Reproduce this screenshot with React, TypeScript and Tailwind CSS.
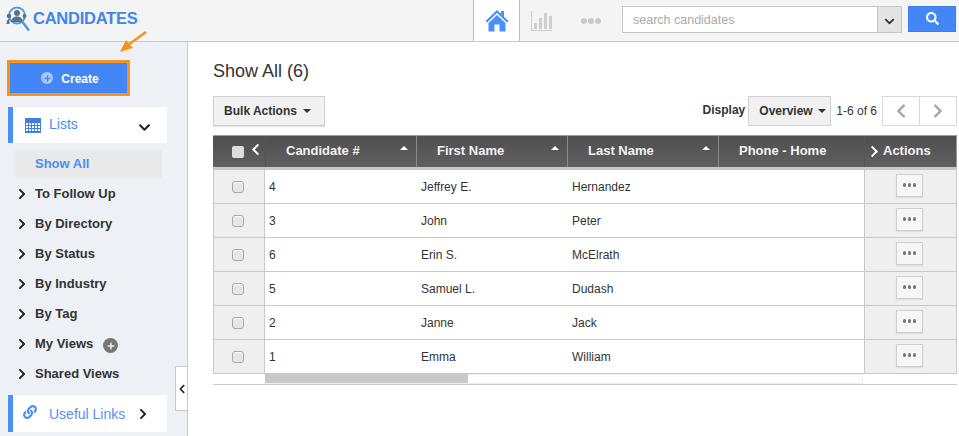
import React from "react";
import { FaChevronDown, FaChevronLeft, FaChevronRight, FaLink, FaSearch, FaPlus } from "react-icons/fa";

const F = "font-['Liberation_Sans',Arial,sans-serif]";

const rows = [
  ["4", "Jeffrey E.", "Hernandez"],
  ["3", "John", "Peter"],
  ["6", "Erin S.", "McElrath"],
  ["5", "Samuel L.", "Dudash"],
  ["2", "Janne", "Jack"],
  ["1", "Emma", "William"],
];

const nav = ["To Follow Up", "By Directory", "By Status", "By Industry", "By Tag", "My Views", "Shared Views"];

function Logo() {
  return (
    <svg width="28" height="28" viewBox="0 0 28 28" className="shrink-0">
      <circle cx="14" cy="10.500" r="8" fill="none" stroke="#4a9be8" strokeWidth="2" />
      <line x1="19.500" y1="17" x2="26" y2="25.500" stroke="#4a9be8" strokeWidth="2.500" />
      <circle cx="14" cy="8" r="3" fill="#5d7186" />
      <path d="M8.500 17c0-4 2.500-5.500 5.500-5.500s5.500 1.500 5.500 5.500z" fill="#5d7186" />
      <circle cx="6" cy="11" r="2.300" fill="#5d7186" />
      <path d="M3.500 19c0-3.500 1-5 3-5v5z" fill="#5d7186" />
      <circle cx="21.500" cy="11" r="2" fill="#5d7186" />
    </svg>
  );
}

function HomeIcon() {
  return (
    <svg width="24" height="23" viewBox="0 0 24 23">
      <path d="M12 1 L0.500 12 L2 13.500 L12 4 L22 13.500 L23.500 12 L19 7.700 V2 H16 V4.800 Z" fill="#4a90f5" />
      <path d="M12 6 L3.500 14 V22.500 H9.500 V15.500 H14.500 V22.500 H20.500 V14 Z" fill="#4a90f5" />
    </svg>
  );
}

function CalendarIcon() {
  return (
    <svg width="16" height="15" viewBox="0 0 16 15">
      <rect width="16" height="15" fill="#3f7fe0" />
      <g fill="#ffffff">
        {[5, 8, 11].map((y) =>
          [1, 4, 7, 10, 13].map((x) => <rect key={`${x}-${y}`} x={x} y={y} width="2" height="2" />)
        )}
      </g>
    </svg>
  );
}

function BarsIcon() {
  return (
    <svg width="22" height="20" viewBox="0 0 22 20">
      <path d="M0.500 0v19.500H21" fill="none" stroke="#cfcfcf" />
      <rect x="3" y="12" width="3" height="6" fill="#cfcfcf" />
      <rect x="8" y="7" width="3" height="11" fill="#cfcfcf" />
      <rect x="13" y="2" width="3" height="16" fill="#cfcfcf" />
      <rect x="18" y="5" width="3" height="13" fill="#cfcfcf" />
    </svg>
  );
}

function Arrow() {
  return (
    <svg width="28" height="24" viewBox="0 0 28 24" className="absolute left-[119px] top-[-11px]">
      <path d="M27 1 L9 14" stroke="#f6931d" strokeWidth="2.500" fill="none" />
      <path d="M1 21 L7 9 L14 17 Z" fill="#f6931d" />
    </svg>
  );
}

function Check({ header }: { header?: boolean }) {
  return (
    <span
      className={
        header
          ? "block w-3 h-3 rounded-[2px] bg-[#dedede]"
          : "block w-3 h-3 rounded-[3px] border border-[#a9a9a9] bg-[#e6e6e6] shadow-[inset_0_1px_1px_#fff]"
      }
    />
  );
}

function Caret() {
  return <span className="w-0 h-0 border-x-[4px] border-x-transparent border-t-[4px] border-t-[#333]" />;
}

function HeaderCell({ label, sort }: { label: string; sort?: boolean }) {
  return (
    <div className="w-[151px] h-full flex items-center pl-[20px] border-r border-[#8a8a8a] relative">
      <span className="text-[13px] font-bold text-[#f2f2f2] pb-[2px]">{label}</span>
      {sort && (
        <span className="absolute right-[8px] top-[10px] w-0 h-0 border-x-[4px] border-x-transparent border-b-[4px] border-b-white" />
      )}
    </div>
  );
}

export default function App() {
  return (
    <div className={`${F} w-[959px] h-[436px] overflow-hidden bg-white flex flex-col text-[#333]`}>
      <header className="h-[42px] shrink-0 bg-[#f4f4f4] border-b border-[#c9c9c9] flex">
        <div className="flex items-center pl-[3px] w-[473px] gap-[2px] pb-[4px]">
          <Logo />
          <span className="text-[16.500px] font-bold text-[#3f86ea] tracking-[-0.25px]">CANDIDATES</span>
        </div>
        <div className="w-[47px] bg-white border-x border-[#bdbdbd] flex items-center justify-center">
          <HomeIcon />
        </div>
        <div className="w-[102px] flex items-center">
          <span className="ml-[11px] flex"><BarsIcon /></span>
          <span className="ml-[28px] flex gap-[1px]">
            <i className="block w-[6px] h-[6px] rounded-full bg-[#c9c9c9]" />
            <i className="block w-[6px] h-[6px] rounded-full bg-[#c9c9c9]" />
            <i className="block w-[6px] h-[6px] rounded-full bg-[#c9c9c9]" />
          </span>
        </div>
        <div className="flex items-start pt-[6px]">
          <div className="w-[280px] h-[27px] flex border border-[#c6c6c6] bg-white">
            <div className="flex-1 pl-[10px] text-[12.500px] text-[#a9a9a9] leading-[26px]">search candidates</div>
            <div className="w-[24px] bg-[#e4e4e4] border-l border-[#c6c6c6] flex items-center justify-center">
              <FaChevronDown size={11} className="text-[#333] mt-[3px]" />
            </div>
          </div>
          <div className="ml-[6px] w-[48px] h-[26px] bg-[#4287f5] border border-[#3d7fe6] flex items-center justify-center">
            <FaSearch size={13} className="text-white -translate-y-[1px]" />
          </div>
        </div>
      </header>

      <div className="flex-1 flex min-h-0">
        <aside className="w-[188px] shrink-0 bg-[#edf0f5] border-r border-[#c9c9c9] relative pt-[18px]">
          <Arrow />
          <div className="ml-[7px] w-[123px] h-[36px] bg-[#4287f5] border-[3px] border-[#f6931d] flex items-center justify-center gap-[8px] pl-[3px]">
            <span className="w-[12px] h-[12px] rounded-full bg-[#a9c7f5] flex items-center justify-center">
              <FaPlus size={7} className="text-[#4287f5]" />
            </span>
            <span className="text-white text-[12px] font-bold pt-[1px]">Create</span>
          </div>
          <div className="mt-[11px] ml-[8px] w-[159px] h-[36px] bg-white border-l-[5px] border-[#4a90f5] flex items-center">
            <span className="ml-[12px] flex"><CalendarIcon /></span>
            <span className="ml-[8px] text-[#4a8ef0] text-[14px] pb-[2px]">Lists</span>
            <FaChevronDown size={13} className="text-[#222] ml-[60px] mt-[4px]" />
          </div>
          <div className="mt-[7px] ml-[15px] w-[147px] h-[28px] bg-[#e9e9e9] text-[#4a8ef0] text-[13px] font-bold flex items-center pl-[20px]">
            Show All
          </div>
          <ul className="mt-[1px]">
            {nav.map((n) => (
              <li key={n} className="h-[30px] flex items-center pl-[16px] text-[13px] font-bold text-[#333]">
                <FaChevronRight size={12} className="text-[#222] mr-[7px]" />
                <span className="pb-px">{n}</span>
                {n === "My Views" && (
                  <span className="ml-[10px] mt-[3px] w-[15px] h-[15px] rounded-full bg-[#777] flex items-center justify-center">
                    <FaPlus size={8} className="text-[#eee]" />
                  </span>
                )}
              </li>
            ))}
          </ul>
          <div className="mt-[6px] ml-[8px] w-[159px] h-[37px] bg-white border-l-[5px] border-[#4a90f5] flex items-center">
            <span className="ml-[10px] flex"><FaLink size={14} className="text-[#4a8ef0] -translate-y-[2px]" /></span>
            <span className="ml-[12px] text-[#5d8df0] text-[14px] pt-[1px]">Useful Links</span>
            <FaChevronRight size={12} className="text-[#222] ml-[12px]" />
          </div>
          <div className="absolute right-0 top-[324px] w-[12px] h-[45px] bg-white border border-r-0 border-[#c9c9c9] flex items-center justify-center">
            <FaChevronLeft size={10} className="text-[#222]" />
          </div>
        </aside>

        <main className="flex-1 min-w-0 pl-[25px] pr-[2px] pt-[18px]">
          <h1 className="text-[18px] leading-[22px] text-[#333]">Show All (6)</h1>
          <div className="mt-[14px] flex items-center h-[30px]">
            <div className="w-[112px] h-[30px] bg-[#f1f1f1] border border-[#d0d0d0] shadow-[0_1px_1px_#e2e2e2] flex items-center justify-center gap-[6px] text-[12px] font-bold pr-[3px]">
              Bulk Actions <Caret />
            </div>
            <span className="ml-auto text-[12px] font-bold mb-[2px]">Display</span>
            <div className="ml-[3px] w-[83px] h-[30px] bg-[#f1f1f1] border border-[#d0d0d0] flex items-center gap-[5px] pl-[10px] text-[12px] font-bold">
              Overview <Caret />
            </div>
            <span className="ml-[5px] text-[12px]">1-6 of 6</span>
            <div className="ml-[5px] w-[75px] h-[30px] border border-[#d8d8d8] flex">
              <div className="flex-1 border-r border-[#d8d8d8] flex items-center justify-center">
                <FaChevronLeft size={16} className="text-[#aaa]" />
              </div>
              <div className="flex-1 flex items-center justify-center">
                <FaChevronRight size={16} className="text-[#aaa]" />
              </div>
            </div>
          </div>

          <div className="mt-[9px] w-[744px]">
            <div className="h-[35px] flex border-t border-[#a0a0a0] border-b-[3px] border-b-[#c8c8c8] bg-gradient-to-b from-[#4f4f4f] to-[#606060]">
              <div className="w-[53px] h-full flex items-center border-r border-[#555] pl-[19px]">
                <Check header />
                <FaChevronLeft size={13} className="text-white ml-[5px] -translate-y-[2px]" />
              </div>
              <HeaderCell label="Candidate #" sort />
              <HeaderCell label="First Name" sort />
              <HeaderCell label="Last Name" sort />
              <div className="w-[146px] h-full flex items-center pl-[20px] border-r border-[#555]">
                <span className="text-[13px] font-bold text-[#f2f2f2] pb-[2px]">Phone - Home</span>
              </div>
              <div className="flex-1 h-full flex items-center pl-[3px] border-r border-[#999]">
                <FaChevronRight size={13} className="text-white" />
                <span className="ml-[2px] text-[13px] font-bold text-[#f2f2f2] pb-[2px]">Actions</span>
              </div>
            </div>
            {rows.map(([id, first, last]) => (
              <div key={id} className="h-[34px] flex border-b border-[#c9c9c9] text-[12px]">
                <div className="w-[52px] bg-[#efefef] border-l border-r border-[#c9c9c9] flex items-center pl-[18px]">
                  <Check />
                </div>
                <div className="w-[152px] pl-[4px] flex items-center">{id}</div>
                <div className="w-[151px] pl-[4px] flex items-center">{first}</div>
                <div className="w-[151px] pl-[4px] flex items-center">{last}</div>
                <div className="w-[145px]" />
                <div className="w-[93px] bg-[#efefef] border-x border-[#c9c9c9] flex items-center pl-[31px]">
                  <div className="w-[27px] h-[23px] bg-[#f6f6f6] border border-[#cfcfcf] shadow-[0_1px_1px_#ddd] flex items-center justify-center gap-[1.500px] mb-[3px]">
                    <i className="block w-[3.500px] h-[3.500px] rounded-full bg-[#777]" />
                    <i className="block w-[3.500px] h-[3.500px] rounded-full bg-[#777]" />
                    <i className="block w-[3.500px] h-[3.500px] rounded-full bg-[#777]" />
                  </div>
                </div>
              </div>
            ))}
            <div className="h-[11px] border-b border-[#c9c9c9] pl-[52px]">
              <div className="w-[598px] h-[10px] border border-[#eeeeee] bg-white">
                <div className="w-[203px] h-[9px] -mt-px -ml-px bg-[#c8c8c8]" />
              </div>
            </div>
          </div>
        </main>
      </div>
    </div>
  );
}
